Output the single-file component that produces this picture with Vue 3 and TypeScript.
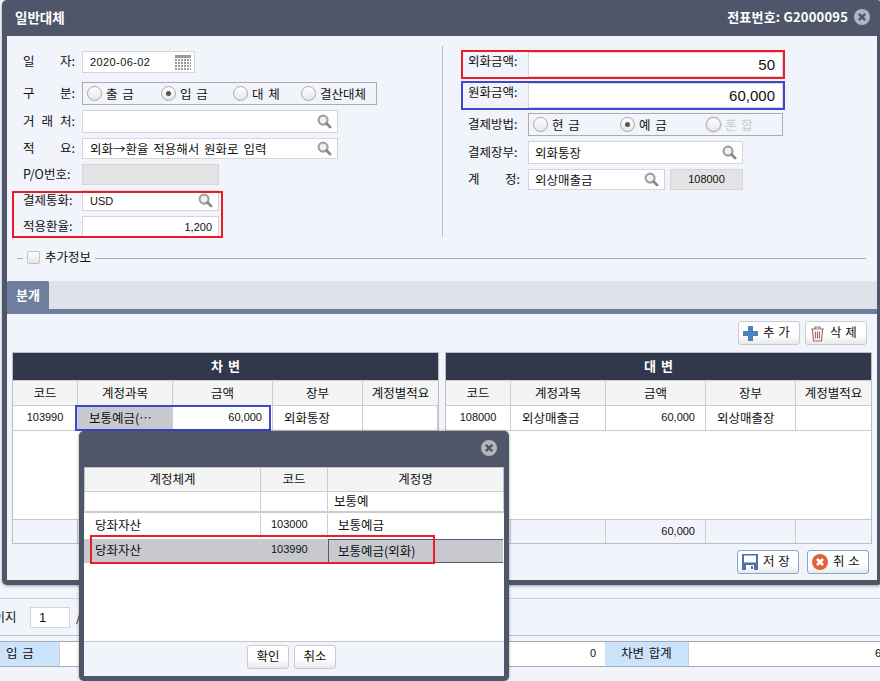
<script setup lang="ts">
interface Col { w: number; label: string; align?: 'left' | 'right' | 'center'; num?: boolean; pad?: boolean }
interface Grid { title: string; row: string[]; foot: string[]; mark: boolean }

const cols: Col[] = [
  { w: 65, label: '코드', align: 'center', num: true },
  { w: 95, label: '계정과목', pad: true },
  { w: 100, label: '금액', align: 'right', num: true, pad: true },
  { w: 90, label: '장부', pad: true },
  { w: 75, label: '계정별적요', pad: true },
]
const grids: Grid[] = [
  { title: '차 변', row: ['103990', '보통예금(⋯', '60,000', '외화통장', ''], foot: ['', '', '', '', ''], mark: true },
  { title: '대 변', row: ['108000', '외상매출금', '60,000', '외상매출장', ''], foot: ['', '', '60,000', '', ''], mark: false },
]
const popCols = [
  { w: 176, label: '계정체계' },
  { w: 67, label: '코드' },
  { w: 175, label: '계정명' },
]
const popRows = [
  { a: '당좌자산', b: '103000', c: '보통예금', sel: false },
  { a: '당좌자산', b: '103990', c: '보통예금(외화)', sel: true },
]
const kinds = [
  { t: '출 금', w: 74, on: false },
  { t: '입 금', w: 72, on: true },
  { t: '대 체', w: 68, on: false },
  { t: '결산대체', w: 70, on: false },
]
const methods = [
  { t: '현 금', w: 87, on: false, off: false },
  { t: '예 금', w: 86, on: true, off: false },
  { t: '혼 합', w: 70, on: false, off: true },
]
</script>

<template>
  <div class="page">
    <svg class="defs" width="0" height="0">
      <symbol id="find" viewBox="0 0 16 16">
        <circle cx="6.5" cy="6.5" r="4.800" fill="#eef3f3" stroke="#a0a0a0" stroke-width="2.300" />
        <path d="M10.200 10.200 14 14" stroke="#888" stroke-width="3" stroke-linecap="round" />
      </symbol>
      <symbol id="close" viewBox="0 0 16 16">
        <circle cx="8" cy="8" r="8" fill="#b4b6bc" />
        <path d="M4.800 4.800 11.200 11.200M11.200 4.800 4.800 11.200" stroke="#50566a" stroke-width="2.400" />
      </symbol>
    </svg>

    <div class="back-pager">
      <span class="pager-label">페이지</span>
      <span class="pager-input num">1</span>
      <span class="pager-sep">/</span>
    </div>
    <div class="back-sum">
      <span class="sum-head">입 금</span>
      <span class="sum-val num">0</span>
      <span class="sum-head sum-center">차변 합계</span>
      <span class="sum-last num">60,000</span>
    </div>

    <section class="win">
      <header class="win-head">
        <span class="win-title">일반대체</span>
        <span class="win-no">전표번호: G2000095</span>
        <svg class="win-close"><use href="#close" /></svg>
      </header>

      <div class="win-body">
        <div class="form">
          <div class="col-left">
            <div class="row">
              <label class="lbl">일 자:</label>
              <div class="field w113">
                <span class="num date">2020-06-02</span>
                <svg class="cal" width="16" height="15" viewBox="0 0 16 15">
                  <rect width="16" height="3" fill="#9a9a9a" />
                  <path d="M0 5H16M0 8H16M0 11H16M0 14H16" stroke="#9a9a9a" stroke-width="2" stroke-dasharray="2 1" />
                </svg>
              </div>
            </div>
            <div class="row first-gap">
              <label class="lbl">구 분:</label>
              <div class="radios w295">
                <span v-for="k in kinds" :key="k.t" class="radio-item" :style="{ width: k.w + 'px' }">
                  <i class="radio" :class="{ on: k.on }"></i>{{ k.t }}
                </span>
              </div>
            </div>
            <div class="row">
              <label class="lbl">거 래 처:</label>
              <div class="field w256 h23"><svg class="find"><use href="#find" /></svg></div>
            </div>
            <div class="row">
              <label class="lbl">적 요:</label>
              <div class="field w256">
                <span>외화→환율 적용해서 원화로 입력</span>
                <svg class="find"><use href="#find" /></svg>
              </div>
            </div>
            <div class="row">
              <label class="lbl">P/O번호:</label>
              <div class="field w137 gray"></div>
            </div>
            <div class="mark-wrap">
              <div class="row">
                <label class="lbl">결제통화:</label>
                <div class="field w137">
                  <span class="num">USD</span>
                  <svg class="find"><use href="#find" /></svg>
                </div>
              </div>
              <div class="row">
                <label class="lbl">적용환율:</label>
                <div class="field w137 right"><span class="num">1,200</span></div>
              </div>
              <span class="mark red left-mark"></span>
            </div>
          </div>

          <div class="vline"></div>

          <div class="col-right">
            <div class="row big-row">
              <label class="lbl">외화금액:</label>
              <div class="field w255 big right">50</div>
              <span class="mark red right-mark"></span>
            </div>
            <div class="row big-row">
              <label class="lbl">원화금액:</label>
              <div class="field w255 big right">60,000</div>
              <span class="mark blue right-mark"></span>
            </div>
            <div class="row">
              <label class="lbl">결제방법:</label>
              <div class="radios w255">
                <span v-for="m in methods" :key="m.t" class="radio-item" :class="{ off: m.off }" :style="{ width: m.w + 'px' }">
                  <i class="radio" :class="{ on: m.on, dis: m.off }"></i>{{ m.t }}
                </span>
              </div>
            </div>
            <div class="row">
              <label class="lbl">결제장부:</label>
              <div class="field w215 h23">
                <span>외화통장</span>
                <svg class="find"><use href="#find" /></svg>
              </div>
            </div>
            <div class="row">
              <label class="lbl">계 정:</label>
              <div class="field w137">
                <span>외상매출금</span>
                <svg class="find"><use href="#find" /></svg>
              </div>
              <div class="code-box num">108000</div>
            </div>
          </div>
        </div>

        <div class="extra">
          <i class="dash"></i>
          <i class="check"></i>
          <span>추가정보</span>
          <i class="rule"></i>
        </div>

        <div class="tabs"><span class="tab">분개</span></div>

        <div class="tools">
          <button class="btn">
            <svg width="15" height="15" viewBox="0 0 15 15"><path d="M5 0h5v5h5v5h-5v5H5v-5H0V5h5z" fill="#4d83bb" /></svg>
            <span>추 가</span>
          </button>
          <button class="btn">
            <svg width="15" height="17" viewBox="0 0 15 17" fill="none" stroke="#a46f6f" stroke-width="1.200">
              <path d="M1 4h13M5 4V2h5v2M2.500 4l1 12h8l1-12M5.500 6.500v7M7.500 6.500v7M9.500 6.500v7" />
            </svg>
            <span>삭 제</span>
          </button>
        </div>

        <div class="grids">
          <div v-for="g in grids" :key="g.title" class="grid">
            <div class="grid-title">{{ g.title }}</div>
            <div class="tr th">
              <span v-for="c in cols" :key="c.label" class="td center" :style="{ width: c.w + 'px' }">{{ c.label }}</span>
            </div>
            <div class="tr data">
              <span
                v-for="(c, i) in cols"
                :key="c.label"
                class="td"
                :class="[c.align, { num: c.num, pad: c.pad, picked: g.mark && i === 1 }]"
                :style="{ width: c.w + 'px' }"
              >{{ g.row[i] }}</span>
              <span v-if="g.mark" class="mark blue cell-mark"></span>
            </div>
            <div class="grid-fill"></div>
            <div class="tr foot">
              <span
                v-for="(c, i) in cols"
                :key="c.label"
                class="td"
                :class="[c.align, { num: c.num, pad: c.pad }]"
                :style="{ width: c.w + 'px' }"
              >{{ g.foot[i] }}</span>
            </div>
          </div>
        </div>

        <div class="actions">
          <button class="btn act">
            <svg width="16" height="16" viewBox="0 0 16 16">
              <path d="M0 0h16v16H0z" fill="#4f70ae" />
              <path d="M2 1.500h12v7H2z" fill="#fff" />
              <path d="M4 11h8v5H4z" fill="#fff" />
              <path d="M9 12h2v3H9z" fill="#4f70ae" />
            </svg>
            <span>저 장</span>
          </button>
          <button class="btn act">
            <svg width="16" height="16" viewBox="0 0 16 16">
              <circle cx="8" cy="8" r="8" fill="#e0623c" />
              <path d="M5 5 11 11M11 5 5 11" stroke="#fff" stroke-width="2.600" />
            </svg>
            <span>취 소</span>
          </button>
        </div>
      </div>
    </section>

    <section class="pop">
      <header class="pop-head"><svg class="pop-close"><use href="#close" /></svg></header>
      <div class="pop-body">
        <div class="ptr pth">
          <span v-for="c in popCols" :key="c.label" class="ptd center" :style="{ width: c.w + 'px' }">{{ c.label }}</span>
        </div>
        <div class="ptr pfilter">
          <span class="ptd" :style="{ width: '176px' }"></span>
          <span class="ptd" :style="{ width: '67px' }"></span>
          <span class="ptd" :style="{ width: '175px' }">보통예</span>
        </div>
        <div class="prows">
          <div v-for="r in popRows" :key="r.b" class="ptr prow" :class="{ sel: r.sel }">
            <span class="ptd" :style="{ width: '176px' }">{{ r.a }}</span>
            <span class="ptd num" :style="{ width: '67px' }">{{ r.b }}</span>
            <span class="ptd" :class="{ focus: r.sel }" :style="{ width: '175px' }">{{ r.c }}</span>
          </div>
          <span class="mark red pop-mark"></span>
        </div>
        <div class="pop-foot">
          <button class="btn small">확인</button>
          <button class="btn small">취소</button>
        </div>
      </div>
    </section>
  </div>
</template>

<style>
html, body { margin: 0; padding: 0; }
</style>

<style scoped>
* { box-sizing: border-box; }
.page {
  position: relative;
  width: 880px;
  height: 681px;
  overflow: hidden;
  padding-top: 598px;
  background: #f1f4fa;
  color: #111;
  word-spacing: 2px;
  font: 12.500px/18px "Noto Sans CJK KR", "Liberation Sans", sans-serif;
}
.defs { position: absolute; }
.num { font-family: "Liberation Sans", "Noto Sans CJK KR", sans-serif; font-size: 11px; }
.date { letter-spacing: .4px; }

.back-pager {
  display: flex;
  align-items: center;
  height: 38px;
  border-top: 1px solid #cfd1d6;
  border-bottom: 1px solid #bcbec4;
}
.pager-label { margin-left: -18px; width: 48px; flex: none; white-space: nowrap; }
.pager-input {
  width: 40px;
  height: 21px;
  padding-left: 8px;
  background: #fff;
  border: 1px solid #d2d4d8;
  font-size: 13px;
  line-height: 19px;
  flex: none;
}
.pager-sep { margin-left: 6px; }
.back-sum {
  display: flex;
  height: 26px;
  margin-top: 5px;
  background: #fff;
  border-top: 1px solid #a8aaaf;
  border-bottom: 1px solid #a8aaaf;
  white-space: nowrap;
}
.sum-head {
  width: 60px;
  padding-left: 6px;
  background: #cbe4fb;
  border-right: 1px solid #d0d0d0;
  line-height: 22px;
  flex: none;
}
.sum-val { width: 536px; text-align: right; line-height: 22px; flex: none; }
.sum-center { width: 84px; margin-left: 9px; padding-left: 16px; }
.sum-last { padding-left: 186px; line-height: 22px; flex: none; }

.win {
  position: absolute;
  left: 2px;
  top: 0;
  width: 880px;
  height: 585px;
  display: flex;
  flex-direction: column;
  padding: 0 5px 5px;
  background: #50566a;
  border-radius: 5px;
  box-shadow: 0 1px 3px rgba(0, 0, 0, .35);
}
.win-head {
  display: flex;
  align-items: center;
  height: 36px;
  flex: none;
  padding: 0 7px 2px 8px;
  color: #fff;
  font-weight: 700;
}
.win-title { font-size: 13.500px; flex: 1; }
.win-no { font-size: 13px; letter-spacing: .2px; word-spacing: 0; }
.win-close { width: 16px; height: 16px; margin-left: 6px; }
.win-body {
  flex: 1;
  display: flex;
  flex-direction: column;
  background: #f1f4fa;
}

.form { display: flex; height: 209px; flex: none; }
.col-left {
  width: 435px;
  padding: 15px 0 0 16px;
  display: flex;
  flex-direction: column;
  gap: 5px;
}
.vline { width: 1px; height: 191px; margin-top: 10px; background: #a9c0e4; flex: none; }
.col-right {
  flex: 1;
  padding: 16px 0 0 25px;
  display: flex;
  flex-direction: column;
  gap: 5px;
}
.row { display: flex; align-items: center; position: relative; flex: none; }
.first-gap { margin-top: 4px; }
.big-row { align-items: flex-start; }
.big-row:first-child { margin-bottom: 1px; }
.lbl {
  width: 52px;
  margin-right: 7px;
  padding-bottom: 2px;
  text-align: justify;
  text-align-last: justify;
  white-space: normal;
  flex: none;
}
.col-right .lbl { margin-right: 8px; }
.big-row .lbl { padding-bottom: 0; }

.field {
  display: flex;
  align-items: center;
  justify-content: space-between;
  height: 21px;
  padding: 0 5px 0 7px;
  background: #fff;
  border: 1px solid #d3d5da;
  white-space: nowrap;
}
.col-right .field { padding-left: 6px; }
.h23 { height: 23px; }
.w113 { width: 113px; height: 22px; }
.w137 { width: 137px; }
.w215 { width: 215px; }
.w255 { width: 255px; }
.w256 { width: 256px; }
.w295 { width: 295px; }
.gray { background: #e3e3e3; }
.right { justify-content: flex-end; padding-right: 6px; }
.big {
  height: 25px;
  padding-right: 7px;
  font: 15px/23px "Liberation Sans", sans-serif;
}
.cal { margin-right: -2px; }
.find { width: 15px; height: 15px; margin-left: auto; }
.code-box {
  width: 73px;
  height: 21px;
  margin-left: 5px;
  background: #e3e3e3;
  border: 1px solid #d3d5da;
  text-align: center;
  line-height: 18px;
}

.radios {
  display: flex;
  align-items: center;
  height: 23px;
  padding-left: 4px;
  border: 1px solid #a9abb0;
  white-space: nowrap;
}
.radio-item { display: flex; align-items: center; gap: 4px; flex: none; }
.radio {
  position: relative;
  width: 15px;
  height: 15px;
  border-radius: 50%;
  border: 1px solid #a8a8a8;
  background: linear-gradient(#fff, #e6e6e6);
  flex: none;
}
.radio.on::after {
  content: "";
  position: absolute;
  left: 4px;
  top: 4px;
  width: 5px;
  height: 5px;
  border-radius: 50%;
  background: #555;
}
.radio.dis { box-shadow: 0 0 0 1px #dcdcdc; }
.off { color: #c8c8c8; }

.mark { position: absolute; border-style: solid; border-width: 2px; pointer-events: none; }
.red { border-color: #ed1c24; }
.blue { border-color: #3f48cc; }
.mark-wrap { position: relative; display: flex; flex-direction: column; gap: 5px; }
.left-mark { left: -11px; top: 1px; width: 211px; height: 47px; }
.right-mark { left: -7px; top: -2px; width: 324px; height: 29px; }
.cell-mark { left: 62px; top: -1px; width: 196px; height: 26px; }

.extra {
  display: flex;
  align-items: center;
  gap: 4px;
  height: 14px;
  margin-top: 5px;
  padding: 0 11px 0 10px;
  flex: none;
}
.dash { width: 6px; height: 1px; background: #a9abb0; margin-top: 2px; }
.check {
  width: 13px;
  height: 13px;
  background: linear-gradient(#fff, #e6e6e6);
  border: 1px solid #c4c4c4;
  border-radius: 2px;
}
.extra span { margin-left: 1px; }
.rule { flex: 1; height: 1px; background: #a9abb0; margin-top: 2px; }

.tabs {
  display: flex;
  height: 33px;
  margin-top: 17px;
  background: #dfe2ea;
  border-bottom: 5px solid #6f7d9e;
  flex: none;
}
.tab {
  width: 42px;
  height: 29px;
  padding-left: 9px;
  background: #6f7d9e;
  color: #fff;
  font-weight: 700;
  font-size: 13px;
  line-height: 27px;
  border-radius: 2px 2px 0 0;
}
.tools {
  display: flex;
  justify-content: flex-end;
  gap: 5px;
  height: 24px;
  margin-top: 7px;
  padding-right: 10px;
  flex: none;
}
.btn {
  display: flex;
  align-items: center;
  gap: 5px;
  width: 62px;
  height: 24px;
  padding: 0 0 0 4px;
  background: linear-gradient(#fff 60%, #e9e9e9);
  border: 1px solid #c9cbd0;
  border-radius: 3px;
  color: #111;
  font: inherit;
  word-spacing: 1px;
  white-space: nowrap;
}
.btn svg { flex: none; }
.btn span { padding-bottom: 3px; }

.grids {
  display: flex;
  gap: 6px;
  height: 192px;
  margin-top: 7px;
  padding: 0 5px;
  flex: none;
}
.grid {
  display: flex;
  flex-direction: column;
  width: 427px;
  background: #fff;
  border: 1px solid #bcbec3;
}
.grid-title {
  height: 27px;
  background: #31384c;
  color: #fff;
  font-weight: 700;
  font-size: 13px;
  text-align: center;
  line-height: 26px;
  flex: none;
}
.tr { display: flex; position: relative; flex: none; white-space: nowrap; }
.td {
  height: 100%;
  padding: 0 1px;
  border-right: 1px solid #cdcdcd;
  overflow: hidden;
}
.td:last-of-type { border-right: none; }
.th { height: 26px; background: #f4f4f4; border-top: 1px solid #cdcdcd; border-bottom: 1px solid #cdcdcd; line-height: 23px; }
.data { height: 25px; border-bottom: 1px solid #cdcdcd; line-height: 23px; }
.foot { height: 24px; background: #f1f4fa; border-top: 1px solid #c4c6cb; line-height: 22px; }
.grid-fill { flex: 1; }
.center { text-align: center; }
.pad { padding-left: 11px; padding-right: 10px; }
.left { text-align: left; }
.td.right { display: block; text-align: right; }
.picked { background: #c7c9cf; }

.actions {
  display: flex;
  justify-content: flex-end;
  gap: 8px;
  margin-top: 6px;
  padding-right: 8px;
  flex: none;
}
.act { border-color: #86a6d2; }

.pop {
  position: absolute;
  left: 79px;
  top: 431px;
  width: 430px;
  height: 250px;
  display: flex;
  flex-direction: column;
  padding: 0 5px 5px;
  background: #50566a;
  border-radius: 5px;
  box-shadow: 0 0 3px rgba(0, 0, 0, .4);
}
.pop-head { display: flex; justify-content: flex-end; align-items: center; height: 36px; padding: 0 7px 2px 0; flex: none; }
.pop-close { width: 16px; height: 16px; }
.pop-body { flex: 1; display: flex; flex-direction: column; background: #fff; }
.ptr { display: flex; flex: none; white-space: nowrap; position: relative; }
.ptd { height: 100%; padding-left: 10px; border-right: 1px solid #cdcdcd; flex: none; }
.ptd:last-child { border-right: none; }
.ptd.center { padding-left: 0; text-align: center; }
.pth { height: 25px; background: #f4f4f4; border: 1px solid #bfc0c4; border-bottom-color: #cdcdcd; line-height: 22px; }
.pfilter { height: 21px; border-left: 1px solid #cdcdcd; border-right: 1px solid #cdcdcd; border-bottom: 2px solid #cdcdcd; line-height: 18px; }
.pfilter .ptd { padding-left: 6px; }
.prows { position: relative; flex: 1; padding-top: 1px; }
.prow { height: 24px; line-height: 21px; border-left: 1px solid transparent; margin-right: 1px; }
.prow + .prow { margin-top: 1px; }
.sel { background: #c7c9cf; }
.focus { border: 1px solid #555a6c; padding-left: 9px; }
.pop-mark { left: 6px; top: 22px; width: 345px; height: 29px; }
.pop-foot {
  display: flex;
  justify-content: center;
  gap: 5px;
  height: 35px;
  padding: 3px 5px 0 0;
  background: #f1f4fa;
  border-top: 1px solid #c4c6cb;
  flex: none;
}
.small { width: 42px; justify-content: center; padding: 0 0 3px; }
</style>
